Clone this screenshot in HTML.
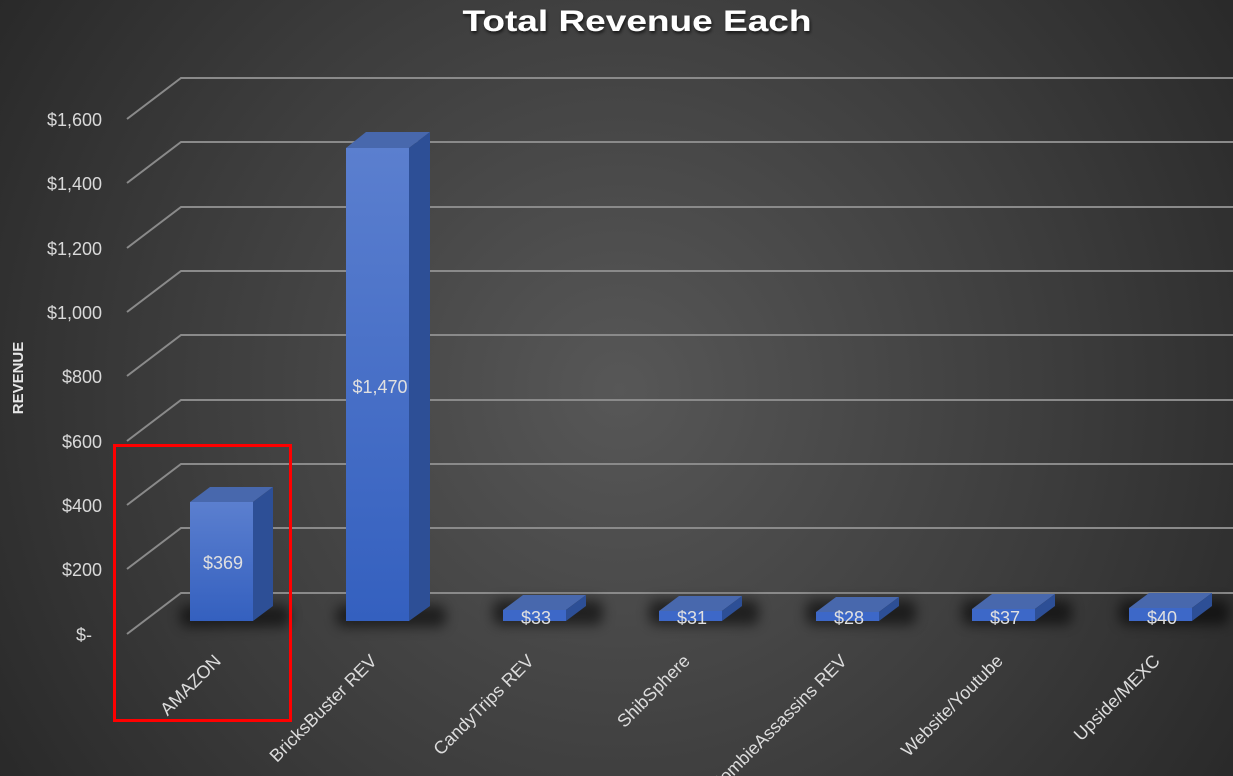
<!DOCTYPE html>
<html><head><meta charset="utf-8"><style>
html,body{margin:0;padding:0;width:1233px;height:776px;overflow:hidden;background:#333}
svg{display:block}
text{font-family:"Liberation Sans",sans-serif}
</style></head><body>
<svg width="1233" height="776" viewBox="0 0 1233 776" xmlns="http://www.w3.org/2000/svg">
<defs>
<radialGradient id="bg" cx="620" cy="390" r="780" gradientUnits="userSpaceOnUse">
<stop offset="0" stop-color="#575757"/><stop offset="0.55" stop-color="#3d3d3d"/><stop offset="1" stop-color="#262626"/>
</radialGradient>
<linearGradient id="front" x1="0" y1="0" x2="0" y2="1">
<stop offset="0" stop-color="#5b7fcf"/><stop offset="1" stop-color="#3460bf"/>
</linearGradient>
<filter id="blur" x="-50%" y="-50%" width="200%" height="200%"><feGaussianBlur stdDeviation="6"/></filter>
<filter id="ts"><feDropShadow dx="1" dy="2" stdDeviation="1.5" flood-color="#000" flood-opacity="0.7"/></filter>
</defs>
<rect width="1233" height="776" fill="url(#bg)"/>
<text x="637" y="31" text-anchor="middle" font-size="30" font-weight="bold" fill="#fff" textLength="349" lengthAdjust="spacingAndGlyphs" filter="url(#ts)">Total Revenue Each</text>
<g stroke="#8a8a8a" stroke-width="2" fill="none">
<path d="M127 119L181 78H1233M127 183L181 142H1233M127 248L181 207H1233M127 312L181 271H1233M127 376L181 335H1233M127 441L181 400H1233M127 505L181 464H1233M127 569L181 528H1233M127 634L181 593H1233"/>
</g>
<g font-size="18" fill="#d9d9d9" text-anchor="end">
<text x="102" y="126">$1,600</text><text x="102" y="190">$1,400</text><text x="102" y="255">$1,200</text>
<text x="102" y="319">$1,000</text><text x="102" y="383">$800</text><text x="102" y="448">$600</text>
<text x="102" y="512">$400</text><text x="102" y="576">$200</text><text x="92" y="641">$-</text>
</g>
<text transform="translate(23,378) rotate(-90)" text-anchor="middle" font-size="15" font-weight="bold" fill="#e6e6e6">REVENUE</text>
<g fill="#000" opacity="0.55" filter="url(#blur)">
<rect x="180" y="605" width="110" height="22" rx="8"/><rect x="336" y="605" width="110" height="22" rx="8"/>
<rect x="493" y="600" width="110" height="25" rx="8"/><rect x="649" y="600" width="110" height="25" rx="8"/>
<rect x="806" y="600" width="110" height="25" rx="8"/><rect x="962" y="600" width="110" height="25" rx="8"/>
<rect x="1119" y="600" width="110" height="25" rx="8"/>
</g>
<g id="bars">
<g><polygon points="190,502 210,487 273,487 253,502" fill="#4868ad"/><polygon points="253,502 273,487 273,606 253,621" fill="#2d4f96"/><rect x="190" y="502" width="63" height="119" fill="url(#front)"/></g>
<g><polygon points="346,148 366,132 430,132 409,148" fill="#4868ad"/><polygon points="409,148 430,132 430,606 409,621" fill="#2d4f96"/><rect x="346" y="148" width="63" height="473" fill="url(#front)"/></g>
<g><polygon points="503,610 523,595 586,595 566,610" fill="#4868ad"/><polygon points="566,610 586,595 586,606 566,621" fill="#2d4f96"/><rect x="503" y="610" width="63" height="11" fill="#3d68c8"/></g>
<g><polygon points="659,611 679,596 742,596 722,611" fill="#4868ad"/><polygon points="722,611 742,596 742,606 722,621" fill="#2d4f96"/><rect x="659" y="611" width="63" height="10" fill="#3d68c8"/></g>
<g><polygon points="816,612 836,597 899,597 879,612" fill="#4868ad"/><polygon points="879,612 899,597 899,606 879,621" fill="#2d4f96"/><rect x="816" y="612" width="63" height="9" fill="#3d68c8"/></g>
<g><polygon points="972,609 992,594 1055,594 1035,609" fill="#4868ad"/><polygon points="1035,609 1055,594 1055,606 1035,621" fill="#2d4f96"/><rect x="972" y="609" width="63" height="12" fill="#3d68c8"/></g>
<g><polygon points="1129,608 1149,593 1212,593 1192,608" fill="#4868ad"/><polygon points="1192,608 1212,593 1212,606 1192,621" fill="#2d4f96"/><rect x="1129" y="608" width="63" height="13" fill="#3d68c8"/></g>
</g>
<g font-size="18" fill="#e0e0e0" text-anchor="middle">
<text x="223" y="569">$369</text><text x="380" y="393">$1,470</text>
<text x="536" y="624">$33</text><text x="692" y="624">$31</text><text x="849" y="624">$28</text>
<text x="1005" y="624">$37</text><text x="1162" y="624">$40</text>
</g>
<g font-size="18" fill="#dcdcdc" text-anchor="end">
<text transform="translate(222,662) rotate(-45)">AMAZON</text>
<text transform="translate(378,662) rotate(-45)">BricksBuster REV</text>
<text transform="translate(535,662) rotate(-45)">CandyTrips REV</text>
<text transform="translate(691,662) rotate(-45)">ShibSphere</text>
<text transform="translate(848,662) rotate(-45)">ZombieAssassins REV</text>
<text transform="translate(1004,662) rotate(-45)">Website/Youtube</text>
<text transform="translate(1161,662) rotate(-45)">Upside/MEXC</text>
</g>
<rect x="114.5" y="445.5" width="176" height="275" fill="none" stroke="#ff0000" stroke-width="3"/>
</svg>
</body></html>
